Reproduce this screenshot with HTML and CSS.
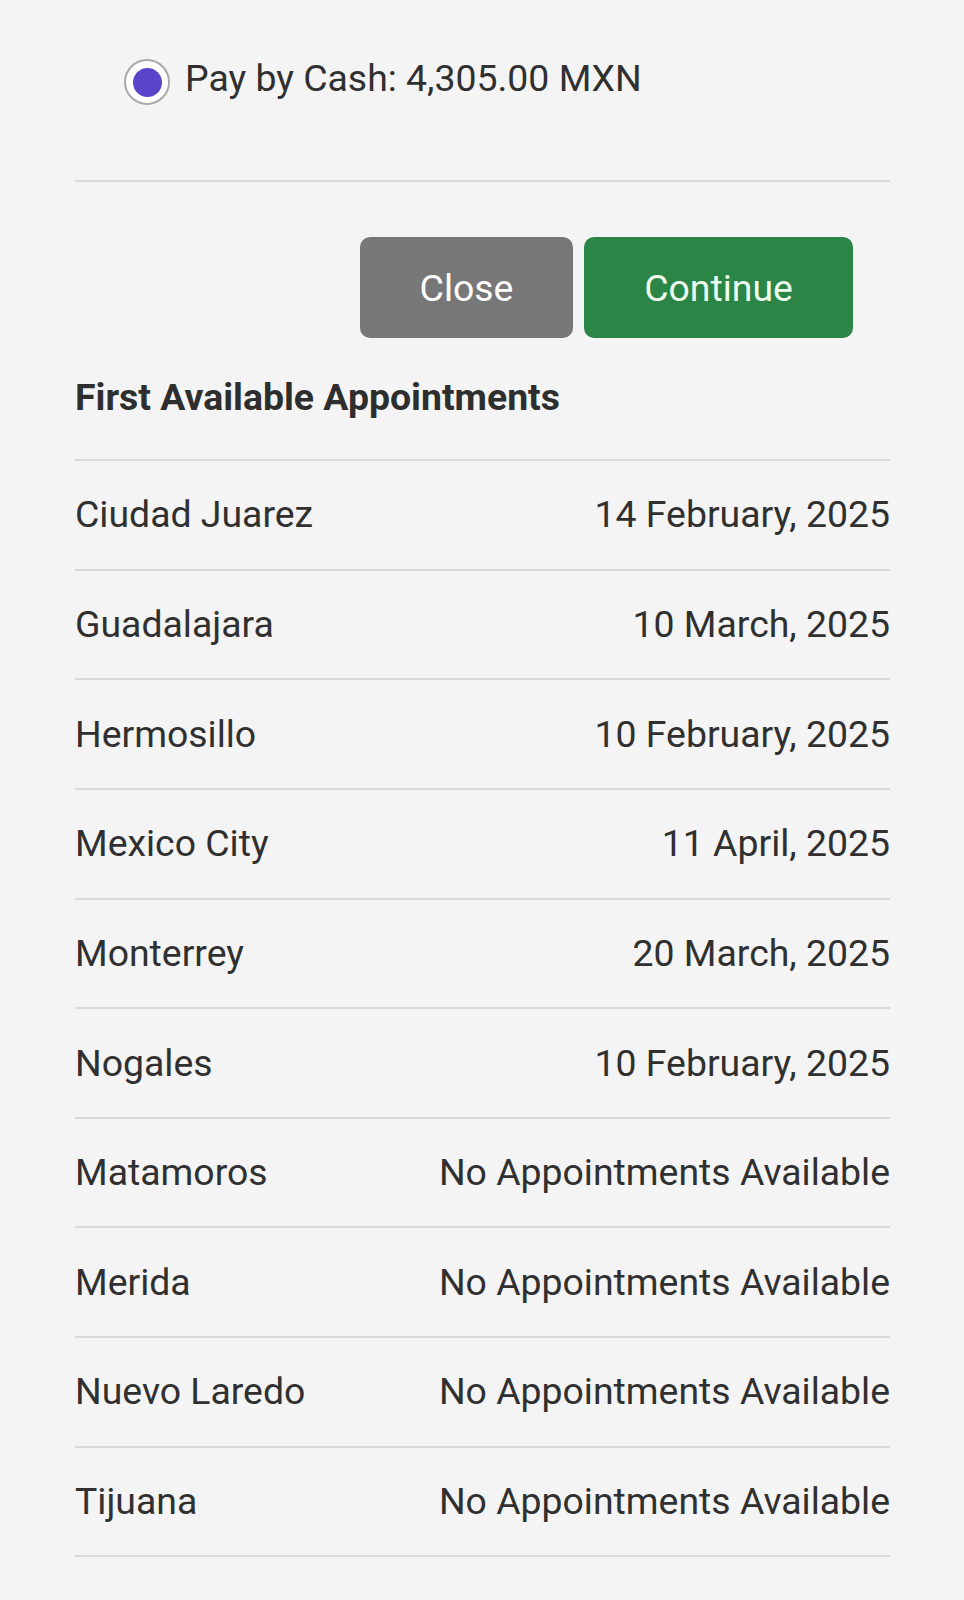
FILE: index.html
```html
<!DOCTYPE html>
<html lang="en">
<head>
<meta charset="utf-8">
<title>First Available Appointments</title>
<link rel="stylesheet" href="styles.css">
</head>
<body>
<div class="container">
  <label class="payment">
    <span class="radio"><span class="radio-dot"></span></span>
    <span class="payment-text">Pay by Cash: 4,305.00 MXN</span>
  </label>
  <hr class="divider">
  <div class="actions">
    <button class="btn btn-close" type="button">Close</button>
    <button class="btn btn-continue" type="button">Continue</button>
  </div>
  <h2 class="heading">First Available Appointments</h2>
  <div class="list">
    <div class="row"><span class="city">Ciudad Juarez</span><span class="date">14 February, 2025</span></div>
    <div class="row"><span class="city">Guadalajara</span><span class="date">10 March, 2025</span></div>
    <div class="row"><span class="city">Hermosillo</span><span class="date">10 February, 2025</span></div>
    <div class="row"><span class="city">Mexico City</span><span class="date">11 April, 2025</span></div>
    <div class="row"><span class="city">Monterrey</span><span class="date">20 March, 2025</span></div>
    <div class="row"><span class="city">Nogales</span><span class="date">10 February, 2025</span></div>
    <div class="row"><span class="city">Matamoros</span><span class="date">No Appointments Available</span></div>
    <div class="row"><span class="city">Merida</span><span class="date">No Appointments Available</span></div>
    <div class="row"><span class="city">Nuevo Laredo</span><span class="date">No Appointments Available</span></div>
    <div class="row"><span class="city">Tijuana</span><span class="date">No Appointments Available</span></div>
  </div>
</div>
</body>
</html>
```

FILE: styles.css
```css
html, body {
  margin: 0;
  padding: 0;
  background: #f4f4f4;
}

body {
  font-family: Roboto, "Noto Sans", "Liberation Sans", sans-serif;
  font-size: 37.4px;
  line-height: 43px;
  color: #303030;
}

.container {
  width: 815px;
  margin-left: 75px;
}

.payment {
  display: flex;
  align-items: flex-start;
  gap: 15px;
  padding: 57px 0 0 49px;
}

.radio {
  box-sizing: border-box;
  width: 46px;
  height: 46px;
  margin-top: 2px;
  border: 2px solid #a9a9a9;
  border-radius: 50%;
  background: #ffffff;
  display: flex;
  align-items: center;
  justify-content: center;
  flex-shrink: 0;
}

.radio-dot {
  width: 29px;
  height: 29px;
  border-radius: 50%;
  background: #5a44c9;
}

.payment-text {
  color: #303030;
}

.divider {
  border: 0;
  border-top: 2px solid #d9d9d9;
  margin: 75px 0 0 0;
  height: 0;
}

.actions {
  display: flex;
  justify-content: flex-end;
  gap: 11px;
  padding-right: 37px;
  margin-top: 55px;
}

.btn {
  height: 101px;
  border: 0;
  border-radius: 10px;
  font-family: inherit;
  font-size: 37.4px;
  color: #ffffff;
  padding: 0;
}

.btn-close {
  width: 213px;
  background: #777777;
}

.btn-continue {
  width: 269px;
  background: #2a8546;
  color: #eefcef;
}

.heading {
  margin: 38px 0 40px 0;
  font-size: 37.4px;
  line-height: 43px;
  font-weight: 700;
  color: #2e2e2e;
}

.list {
  border-bottom: 2px solid #d9d9d9;
}

.row {
  box-sizing: border-box;
  height: 109.65px;
  border-top: 2px solid #d9d9d9;
  display: flex;
  justify-content: space-between;
  align-items: center;
}

.city,
.date {
  white-space: nowrap;
}
```
